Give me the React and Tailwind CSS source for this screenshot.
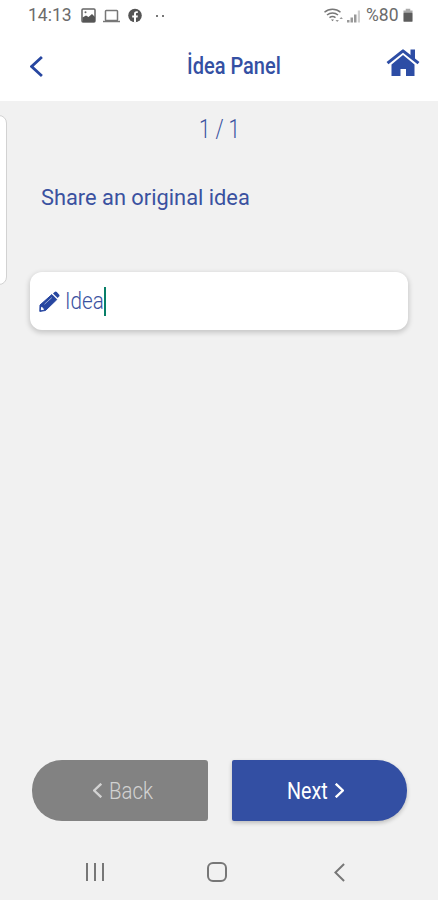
import React from 'react';

const ChevronIcon = ({ className, strokeWidth }) => (
  <svg viewBox="0 0 12 20" fill="none" stroke="currentColor" strokeWidth={strokeWidth} preserveAspectRatio="none" className={className}>
    <path d="M11 1 1.5 10 11 19" vectorEffect="non-scaling-stroke" />
  </svg>
);

const HomeIcon = ({ className }) => (
  <svg viewBox="0 0 34 28" fill="currentColor" className={className}>
    <path d="M24.5 0.5H29V11l-4.5-4z" />
    <path d="M1.5 14.2 17 1.8l15.5 12.4" fill="none" stroke="currentColor" strokeWidth="3" strokeLinejoin="round" />
    <path d="M17 6 28.5 15.5V27H20v-7h-5.5v7H5.5V15.5z" />
  </svg>
);

const PencilIcon = ({ className }) => (
  <svg viewBox="0 0 21 21" className={className}>
    <path d="M1 14 12.8 3.6l5 5L6.5 19.5 0.8 20.4z" fill="currentColor" stroke="currentColor" strokeLinejoin="round" />
    <path d="m14 2.6 1.6-1.5c.7-.7 1.5-.7 2.2 0l2.2 2.3c.7.7.7 1.5 0 2.2l-1.4 1.5z" fill="currentColor" />
    <path d="M5.5 13.2 12.8 6.6" stroke="#a5b2d8" strokeWidth="0.9" />
    <path d="m2.3 15.7 1.2.5.5 1.2 1.2.4-.5 1-2.2.4-.7-.7z" fill="#fff" />
  </svg>
);

const StatusBar = () => (
  <div className="flex h-[31px] items-center pl-[28px] pr-[25px] text-[#6b6b6b]">
    <span className="w-[44px] whitespace-nowrap text-[17.5px]">14:13</span>
    <svg width="15" height="15" viewBox="0 0 15 15" className="ml-[9px]">
      <rect x="1" y="1" width="13" height="13" rx="1" fill="none" stroke="#666" strokeWidth="1.5" />
      <path d="M1.5 9.5 5 7.5l2.5 1.5L11 6l3 3v5H1.5z" fill="#555" />
      <circle cx="4.5" cy="4.3" r="1" fill="#666" />
    </svg>
    <svg width="17" height="14" viewBox="0 0 17 14" fill="none" stroke="#777" strokeWidth="1.5" className="ml-[7px]">
      <rect x="2.5" y="1.5" width="12" height="10" rx="0.8" />
      <path d="M0 12.5h17" />
    </svg>
    <svg width="14" height="15" viewBox="0 0 14 15" className="ml-[8px]">
      <circle cx="7" cy="7.5" r="6.8" fill="#555" />
      <path d="M6 14.5V9.5H4.2V7.4H6V6c0-2 1-2.8 2.6-2.8h1.2V5H8.8C8.1 5 8 5.4 8 6v1.4h1.9l-.3 2.1H8v5z" fill="#fff" />
    </svg>
    <div className="ml-[14px] flex gap-[4px]">
      <span className="size-[2px] bg-[#777]" />
      <span className="size-[2px] bg-[#777]" />
    </div>

    <div className="ml-auto flex items-center">
      <svg width="20" height="15" viewBox="0 0 20 15" fill="none" stroke="#777" strokeWidth="1.5">
        <path d="M0.5 4.2C5 .2 12 .2 16.5 4.2M3 7c3.2-2.7 7.8-2.7 11 0M5.5 9.7c2-1.6 4-1.6 6 0" />
        <path d="m7 11.5 1.5 1.8 1.5-1.8z" fill="#777" stroke="none" />
        <path d="m11.5 12 1.7 2 1.7-2zM15.5 11l1.7-2 1.7 2z" fill="#999" stroke="none" />
      </svg>
      <svg width="14" height="14" viewBox="0 0 14 14" className="ml-[3px]">
        <path d="M0 11h2.5v2.5H0zM3.5 8.5H6v5H3.5zM7 5.5h2.5v8H7z" fill="#999" />
        <path d="M10.8 1.5h2.2v12h-2.2z" fill="#cfcfcf" />
      </svg>
      <span className="ml-[5px] w-[34px] whitespace-nowrap text-[17.5px]">%80</span>
      <svg width="10" height="15" viewBox="0 0 11 15" className="ml-[3px]">
        <path d="M3 0h5v2h2.5v3H.5V2H3z" fill="#aaa" />
        <rect x="0.5" y="4.5" width="10" height="10" rx="1" fill="#5c5c5c" />
      </svg>
    </div>
  </div>
);

const Header = () => (
  <header className="flex h-[70px] items-center pl-[30px] pr-[18px]">
    <ChevronIcon className="h-[21px] w-[13px] text-[#2746a0]" strokeWidth={2.8} />
    <h1 className="ml-[144px] mt-[2px] w-[94px] whitespace-nowrap text-[23px] font-medium text-[#3450a3]">
      <span className="inline-block origin-left scale-x-[0.87]">İdea Panel</span>
    </h1>
    <HomeIcon className="mb-[6px] ml-auto h-[28px] w-[34px] text-[#2d4da5]" />
  </header>
);

const App = () => (
  <div className="relative flex h-[900px] w-[438px] flex-col overflow-hidden bg-[#f1f1f1] font-['Roboto',sans-serif] text-[#3a51a0]">
    <div className="bg-white">
      <StatusBar />
      <Header />
    </div>

    {/* Edge panel handle */}
    <div className="absolute -left-4 top-[115px] h-[170px] w-[23px] rounded-[8px] border border-[#d2d2d2] bg-white" />

    <main className="flex flex-1 flex-col">
      <div className="ml-[199px] mt-[9px] h-[38px] w-[42px] whitespace-nowrap text-[26px] font-light leading-[38px]">
        <span className="inline-block origin-left scale-x-[0.79]">1 / 1</span>
      </div>
      <p className="ml-[41px] mt-[35px] whitespace-nowrap text-[22px] leading-[30px]">
        <span className="inline-block origin-left scale-x-[0.992]">Share an original idea</span>
      </p>
      <div className="ml-[30px] mt-[59px] flex h-[58px] w-[378px] items-center rounded-[12px] bg-white pl-[9px] shadow-[0_2px_5px_1px_rgba(0,0,0,0.17)]">
        <PencilIcon className="size-[21px] text-[#2746a0]" />
        <span className="ml-[5px] w-[39px] whitespace-nowrap text-[24px] font-light">
          <span className="inline-block origin-left scale-x-[0.86]">Idea</span>
        </span>
        <span className="h-[29px] w-[2px] bg-[#087f68]" />
      </div>

      <div className="mt-auto flex gap-[24px] pl-[32px] text-[24px]">
        <button className="flex h-[61px] w-[176px] items-center rounded-l-[30px] rounded-r-[3px] bg-[#828282] pl-[61px] text-[#d2d2d2]">
          <ChevronIcon className="h-[15px] w-[9px]" strokeWidth={2.4} />
          <span className="ml-[7px] w-[45px] whitespace-nowrap text-left font-light">
            <span className="inline-block origin-left scale-x-[0.85]">Back</span>
          </span>
        </button>
        <button className="flex h-[61px] w-[175px] items-center rounded-l-[2px] rounded-r-[30px] bg-[#334fa3] pl-[55px] text-white shadow-[0_2px_4px_rgba(0,0,0,0.22)]">
          <span className="w-[48px] whitespace-nowrap text-left">
            <span className="inline-block origin-left scale-x-[0.82]">Next</span>
          </span>
          <ChevronIcon className="h-[15px] w-[9px] rotate-180" strokeWidth={2.4} />
        </button>
      </div>
    </main>

    {/* System navigation */}
    <nav className="flex h-[79px] items-center pl-[86px] pt-[23px] text-[#777]">
      <div className="flex gap-[6px]">
        <span className="h-[18px] w-[2px] bg-[#777]" />
        <span className="h-[18px] w-[2px] bg-[#777]" />
        <span className="h-[18px] w-[2px] bg-[#777]" />
      </div>
      <span className="ml-[103px] size-[20px] rounded-[6px] border-2 border-[#777]" />
      <ChevronIcon className="ml-[107px] h-[19px] w-[11px]" strokeWidth={2} />
    </nav>
  </div>
);

export default App;
